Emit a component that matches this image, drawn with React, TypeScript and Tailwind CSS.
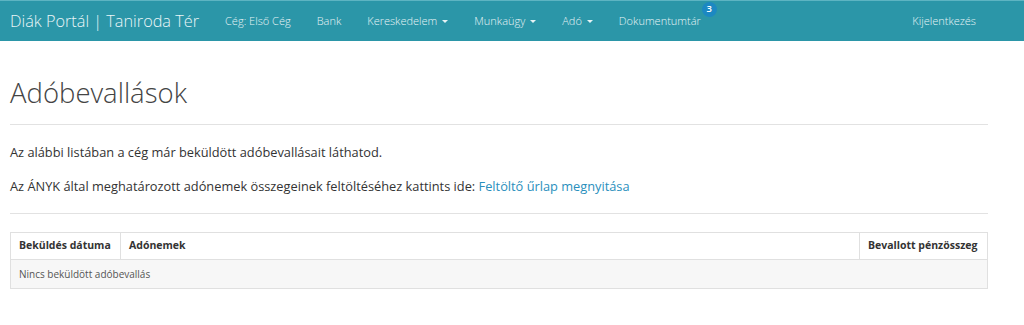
import React from 'react';

const Caret = () => (
  <span className="ml-[5px] inline-block h-0 w-0 border-x-[3.5px] border-t-[3.5px] border-x-transparent border-t-current align-middle" />
);

const navItems = [
  { label: 'Cég: Első Cég' },
  { label: 'Bank' },
  { label: 'Kereskedelem', dropdown: true },
  { label: 'Munkaügy', dropdown: true },
  { label: 'Adó', dropdown: true },
];

export default function App() {
  return (
    <div className="min-h-[325px] bg-white text-[#333] font-['Open_Sans',sans-serif]">
      {/* Navbar */}
      <nav className="flex h-[41px] items-center border-t border-[#5db4c2] bg-[#2b96a8] text-[#e6f3f5]">
        <div className="flex flex-1 items-center pl-[10px]">
          <span className="mr-[26px] text-[16.3px] font-light text-[#eaf5f7]">Diák Portál | Taniroda Tér</span>
          <div className="flex items-center gap-[26px] text-[11px] font-light">
            {navItems.map((item) => (
              <span key={item.label} className="flex items-center">
                {item.label}
                {item.dropdown && <Caret />}
              </span>
            ))}
            <span className="relative">
              Dokumentumtár
              <span className="absolute -top-[11px] -right-[16px] flex h-[15px] w-[15px] items-center justify-center rounded-full bg-[#1c88c2] text-[9.5px] font-semibold text-white">
                3
              </span>
            </span>
          </div>
        </div>
        <span className="mr-[48px] text-[11px] font-light">Kijelentkezés</span>
      </nav>

      {/* Content */}
      <div className="w-[978px] ml-[10px]">
        <h1 className="mt-[35px] text-[27.5px] font-light leading-[34px] text-[#444]">Adóbevallások</h1>
        <hr className="mt-[14px] border-t border-[#e2e2e2]" />
        <p className="mt-[17px] text-[12.8px] leading-[20px]">Az alábbi listában a cég már beküldött adóbevallásait láthatod.</p>
        <p className="mt-[14px] text-[12.8px] leading-[20px]">
          Az ÁNYK által meghatározott adónemek összegeinek feltöltéséhez kattints ide:{' '}
          <span className="text-[#2a8fbd]">Feltöltő űrlap megnyitása</span>
        </p>
        <hr className="mt-[17px] border-t border-[#e2e2e2]" />

        <table className="mt-[18px] w-full border-collapse border border-[#e0e0e0] text-[10.5px]">
          <thead>
            <tr className="h-[27px] text-left text-[#333]">
              <th className="w-[110px] whitespace-nowrap border border-[#e0e0e0] px-[8px] font-bold">Beküldés dátuma</th>
              <th className="whitespace-nowrap border border-[#e0e0e0] px-[8px] font-bold">Adónemek</th>
              <th className="w-[128px] whitespace-nowrap border border-[#e0e0e0] px-[8px] font-bold">Bevallott pénzösszeg</th>
            </tr>
          </thead>
          <tbody>
            <tr className="h-[29px] bg-[#f7f7f7]">
              <td colSpan={3} className="border border-[#e0e0e0] px-[8px] text-[10px] text-[#555]">
                Nincs beküldött adóbevallás
              </td>
            </tr>
          </tbody>
        </table>
      </div>
    </div>
  );
}
